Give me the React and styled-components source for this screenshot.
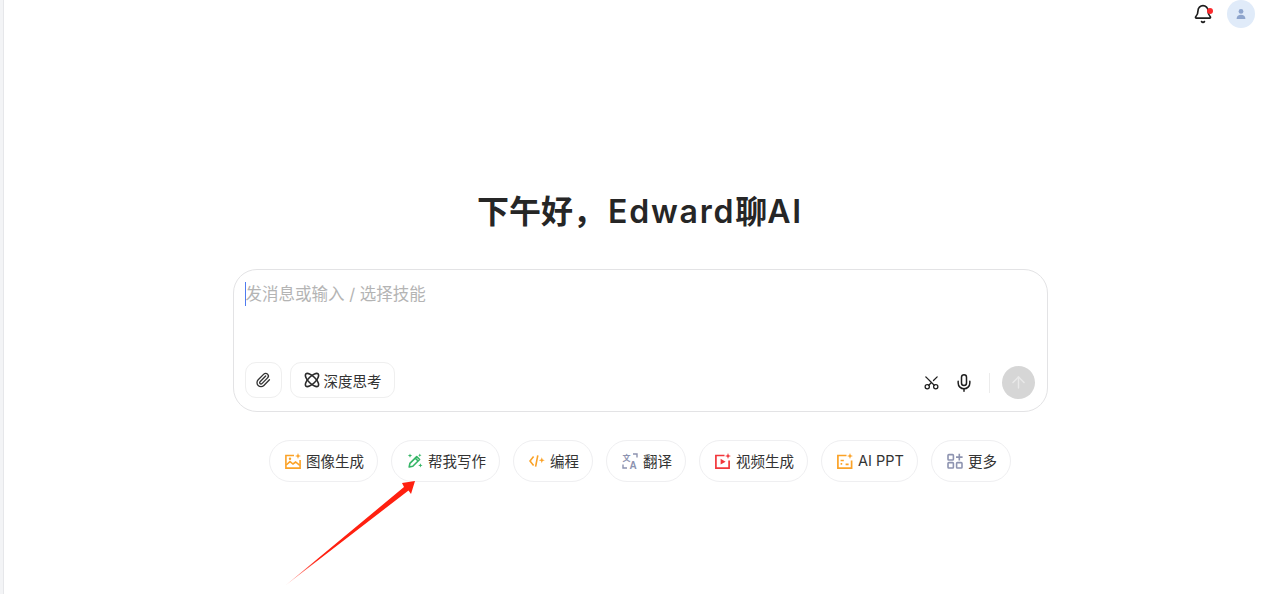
import React from "react";
import styled, { createGlobalStyle } from "styled-components";
import { ArrowUp, Bell, Mic, Paperclip, Scissors } from "lucide-react";

const GlobalStyle = createGlobalStyle`
  html, body {
    margin: 0;
    height: 100%;
    background: #ffffff;
  }
  body {
    overflow: hidden;
    font-family: "Inter", "Noto Sans CJK SC", sans-serif;
    color: #333333;
  }
`;

const chips = [
  { key: "image", label: "图像生成", icon: <ImageIcon /> },
  { key: "write", label: "帮我写作", icon: <PenIcon /> },
  { key: "code", label: "编程", icon: <CodeIcon /> },
  { key: "translate", label: "翻译", icon: <TranslateIcon /> },
  { key: "video", label: "视频生成", icon: <VideoIcon /> },
  { key: "ppt", label: "AI PPT", icon: <PptIcon /> },
  { key: "more", label: "更多", icon: <MoreIcon /> },
];

function ImageIcon() {
  return (
    <svg width="16" height="16" viewBox="0 0 16 16" fill="none" stroke="#fba227" strokeWidth="1.6">
      <path d="M9 2.5H.9v12.6h14.2V7" />
      <path d="M1.2 12 5 8.6l3 2.4 2.6-2 4.2 3.4" />
      <circle cx="5" cy="5.8" r="1.2" fill="#fba227" stroke="none" />
      <path d="M13 0l.8 2.2 2.2.8-2.2.8-.8 2.2-.8-2.2-2.2-.8 2.2-.8z" fill="#fba227" stroke="none" />
    </svg>
  );
}

function PenIcon() {
  return (
    <svg width="16" height="16" viewBox="0 0 16 16" fill="none" stroke="#35b566" strokeWidth="1.6" strokeLinejoin="round">
      <path d="M2.2 14l.7-3.6 6.8-6.8 2.9 2.9-6.8 6.8z" />
      <path d="M8.2 5.1l2.9 2.9" />
      <path d="M3 .4l.6 1.6 1.6.6-1.6.6L3 4.8l-.6-1.6-1.6-.6 1.6-.6zM13.4 10.2l.6 1.6 1.6.6-1.6.6-.6 1.6-.6-1.6-1.6-.6 1.6-.6zM12.8.6l.5 1.2 1.2.5-1.2.5-.5 1.2-.5-1.2-1.2-.5 1.2-.5z" fill="#35b566" stroke="none" />
    </svg>
  );
}

function CodeIcon() {
  return (
    <svg width="16" height="16" viewBox="0 0 16 16" fill="none" stroke="#fba227" strokeWidth="1.6">
      <path d="M4.6 3.6 1 8l3.6 4.4" />
      <path d="M8.8 2.4 6.6 13.6" />
      <path d="M12.8 4.2l.8 2.2 2.2.8-2.2.8-.8 2.2-.8-2.2-2.2-.8 2.2-.8z" fill="#fba227" stroke="none" />
    </svg>
  );
}

const GlyphText = styled.text`
  font-family: "Liberation Sans", "Noto Sans CJK SC", sans-serif;
  font-size: ${(p) => p.$size}px;
  font-weight: 700;
  fill: #8d93b0;
  stroke: none;
`;

function TranslateIcon() {
  return (
    <svg width="16" height="16" viewBox="0 0 16 16" fill="none" stroke="#8d93b0" strokeWidth="1.4">
      <path d="M11 1h4v3.4M1 11.4V15h4" />
      <GlyphText x="0.5" y="8" $size="8">文</GlyphText>
      <GlyphText x="7.6" y="15.5" $size="10">A</GlyphText>
    </svg>
  );
}

function VideoIcon() {
  return (
    <svg width="16" height="16" viewBox="0 0 16 16" fill="none" stroke="#f2373b" strokeWidth="1.7">
      <path d="M9.5 2.5H.9v12.6h13.2V7.5" />
      <path d="M5.6 5.8l5 2.9-5 2.9z" fill="#f2373b" stroke="none" />
      <path d="M13 0l.8 2.2 2.2.8-2.2.8-.8 2.2-.8-2.2-2.2-.8 2.2-.8z" fill="#f2373b" stroke="none" />
    </svg>
  );
}

function PptIcon() {
  return (
    <svg width="16" height="16" viewBox="0 0 16 16" fill="none" stroke="#fba227" strokeWidth="1.7">
      <path d="M9.5 2.5H.9v12.6h13.7V7.5" />
      <path d="M3.6 7.5h3.2M3.6 10.8h1.6M8.6 11.4h3" />
      <path d="M13 0l.8 2.2 2.2.8-2.2.8-.8 2.2-.8-2.2-2.2-.8 2.2-.8z" fill="#fba227" stroke="none" />
    </svg>
  );
}

function MoreIcon() {
  return (
    <svg width="16" height="16" viewBox="0 0 16 16" fill="none" stroke="#8d93b0" strokeWidth="1.6">
      <rect x="1" y="1.6" width="5.4" height="5.4" rx="0.8" />
      <rect x="1" y="9.6" width="5.4" height="5.4" rx="0.8" />
      <rect x="9.6" y="9.6" width="5.4" height="5.4" rx="0.8" />
      <path d="M12.3 .8v6.6M9 4.1h6.6" />
    </svg>
  );
}

function ThinkIcon() {
  return (
    <svg width="16" height="16" viewBox="0 0 16 16" fill="none" stroke="#2b2b2b" strokeWidth="1.6">
      <ellipse cx="8" cy="8" rx="8.6" ry="3.6" transform="rotate(45 8 8)" />
      <ellipse cx="8" cy="8" rx="8.6" ry="3.6" transform="rotate(-45 8 8)" />
    </svg>
  );
}

function App() {
  return (
    <>
      <GlobalStyle />
      <Page>
        <Rail />
        <Main>
          <Header>
            <BellButton>
              <Bell size={20} strokeWidth={2} />
              <RedDot />
            </BellButton>
            <Avatar>
              <svg width="12" height="12" viewBox="0 0 12 12" fill="#8ea5cd">
                <circle cx="6" cy="3.4" r="2.4" />
                <path d="M1.6 11c0-2.8 2-4.2 4.4-4.2s4.4 1.4 4.4 4.2z" />
              </svg>
            </Avatar>
          </Header>
          <Body>
            <Title>
              下午好，<Latin $lead>Edward</Latin>聊<Latin>AI</Latin>
            </Title>
            <Composer>
              <Prompt>发消息或输入 / 选择技能</Prompt>
              <ComposerBar>
                <ToolGroup>
                  <ToolButton $square>
                    <Paperclip size={16} strokeWidth={2} />
                  </ToolButton>
                  <ToolButton>
                    <ThinkIcon />
                    深度思考
                  </ToolButton>
                </ToolGroup>
                <ActionGroup>
                  <PlainIcon>
                    <ScissorsUp size={17} strokeWidth={1.8} />
                  </PlainIcon>
                  <PlainIcon>
                    <Mic size={20} strokeWidth={1.8} />
                  </PlainIcon>
                  <Divider />
                  <SendButton>
                    <ArrowUp size={19} strokeWidth={1.8} />
                  </SendButton>
                </ActionGroup>
              </ComposerBar>
            </Composer>
            <ChipRow>
              {chips.map((chip) => (
                <Chip key={chip.key}>
                  {chip.icon}
                  <ChipLabel>{chip.label}</ChipLabel>
                </Chip>
              ))}
            </ChipRow>
          </Body>
        </Main>
        <Arrow viewBox="0 0 140 116" width="140" height="116">
          <defs>
            <linearGradient id="arrowFade" x1="0" y1="1" x2="0.25" y2="0.75">
              <stop offset="0" stopColor="#ff2010" stopOpacity="0.35" />
              <stop offset="1" stopColor="#ff2010" />
            </linearGradient>
          </defs>
          <path d="M6 115 124 17 122 13 135 11 131 24 128.5 20.5z" fill="url(#arrowFade)" />
        </Arrow>
      </Page>
    </>
  );
}

const Page = styled.div`
  position: relative;
  display: flex;
  height: 594px;
  overflow: hidden;
`;

const Rail = styled.aside`
  flex: 0 0 4px;
  box-sizing: border-box;
  background: #f3f4f6;
  border-right: 1px solid #e6e7ea;
`;

const Main = styled.main`
  flex: 1;
  min-width: 0;
  margin-right: 4px;
  display: flex;
  flex-direction: column;
`;

const Header = styled.header`
  display: flex;
  justify-content: flex-end;
  align-items: center;
  gap: 14px;
  height: 28px;
  padding-right: 21px;
`;

const BellButton = styled.div`
  position: relative;
  display: flex;
  color: #1c1c1c;
`;

const RedDot = styled.span`
  position: absolute;
  top: 4px;
  right: 0;
  width: 6px;
  height: 6px;
  border-radius: 50%;
  background: #fa2a2d;
`;

const Avatar = styled.div`
  width: 28px;
  height: 28px;
  border-radius: 50%;
  background: #e0ebf9;
  display: flex;
  align-items: center;
  justify-content: center;
`;

const Body = styled.div`
  display: flex;
  flex-direction: column;
  align-items: center;
  padding-top: 162px;
`;

const Title = styled.h1`
  margin: 0;
  font-size: 32px;
  line-height: 44px;
  font-weight: 600;
  color: #262626;
  font-family: "Inter", "Noto Sans CJK SC", sans-serif;
`;

const Latin = styled.span`
  letter-spacing: 1.8px;
  margin-left: ${(p) => (p.$lead ? "3px" : "0")};
`;

const Composer = styled.section`
  box-sizing: border-box;
  width: 815px;
  height: 143px;
  margin-top: 35px;
  padding: 12px 11px 13px;
  border: 1px solid #e3e3e5;
  border-radius: 24px;
  display: flex;
  flex-direction: column;
  justify-content: space-between;
  background: #ffffff;
`;

const Prompt = styled.div`
  font-size: 16.5px;
  line-height: 24px;
  color: #b4b4b4;
  border-left: 1px solid #4f7bf0;
  height: 24px;
`;

const ComposerBar = styled.div`
  display: flex;
  justify-content: space-between;
  align-items: flex-end;
`;

const ToolGroup = styled.div`
  display: flex;
  gap: 8px;
`;

const ToolButton = styled.div`
  box-sizing: border-box;
  height: 36px;
  width: ${(p) => (p.$square ? "37px" : "auto")};
  padding: ${(p) => (p.$square ? "0" : "0 12px 0 13px")};
  display: flex;
  align-items: center;
  justify-content: center;
  gap: 4px;
  border: 1px solid #efefef;
  border-radius: 11px;
  font-size: 14.5px;
  color: #333333;
`;

const ActionGroup = styled.div`
  display: flex;
  align-items: center;
  height: 33px;
  padding-right: 1px;
  margin-bottom: -1px;
`;

const PlainIcon = styled.div`
  width: 33px;
  display: flex;
  justify-content: center;
  color: #1f1f1f;
`;

const ScissorsUp = styled(Scissors)`
  transform: rotate(-90deg);
`;

const Divider = styled.span`
  width: 1px;
  height: 20px;
  margin: 0 12px 0 8px;
  background: #ececec;
`;

const SendButton = styled.div`
  width: 33px;
  height: 33px;
  border-radius: 50%;
  background: #d6d6d6;
  color: #e9e9e9;
  display: flex;
  align-items: center;
  justify-content: center;
`;

const ChipRow = styled.nav`
  display: flex;
  gap: 13px;
  margin-top: 28px;
`;

const Chip = styled.div`
  box-sizing: border-box;
  height: 42px;
  padding: 0 13px 0 15px;
  display: flex;
  align-items: center;
  gap: 5px;
  border: 1px solid #efeff1;
  border-radius: 21px;
  font-size: 14.5px;
  color: #333333;
  white-space: nowrap;
`;

const ChipLabel = styled.span`
  margin-top: -2px;
`;

const Arrow = styled.svg`
  position: absolute;
  left: 280px;
  top: 470px;
`;

export default App;
